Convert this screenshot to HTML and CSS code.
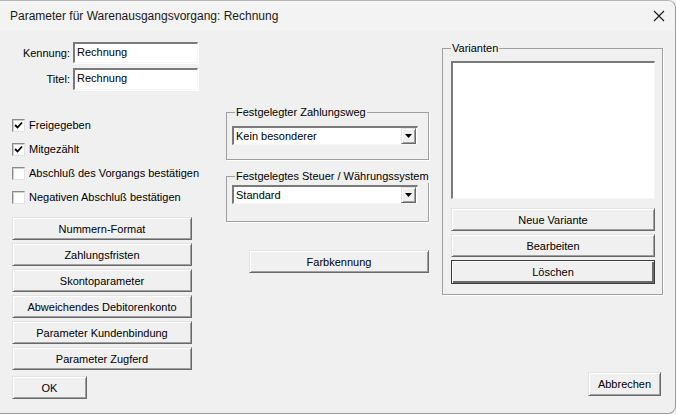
FILE: index.html
```html
<!DOCTYPE html>
<html lang="de">
<head>
<meta charset="utf-8">
<title>Parameter für Warenausgangsvorgang: Rechnung</title>
<link rel="stylesheet" href="styles.css">
</head>
<body>
<div class="window">
  <div class="titlebar">
    <span class="title">Parameter für Warenausgangsvorgang: Rechnung</span>
    <svg class="close" width="12" height="12" viewBox="0 0 12 12"><path d="M1 1 L11 11 M11 1 L1 11" stroke="#1a1a1a" stroke-width="1.1" fill="none"/></svg>
  </div>
  <div class="client">
    <div class="main">
      <div class="col-left">
        <div class="field-row"><label class="lbl">Kennung:</label><div class="edit">Rechnung</div></div>
        <div class="field-row second"><label class="lbl">Titel:</label><div class="edit">Rechnung</div></div>
        <div class="checks">
          <div class="check"><span class="box"><svg width="9" height="9" viewBox="0 0 9 9"><path d="M1 4 L3.5 6.5 L8 1.5" stroke="#000" stroke-width="1.8" fill="none"/></svg></span>Freigegeben</div>
          <div class="check"><span class="box"><svg width="9" height="9" viewBox="0 0 9 9"><path d="M1 4 L3.5 6.5 L8 1.5" stroke="#000" stroke-width="1.8" fill="none"/></svg></span>Mitgezählt</div>
          <div class="check"><span class="box"></span>Abschluß des Vorgangs bestätigen</div>
          <div class="check"><span class="box"></span>Negativen Abschluß bestätigen</div>
        </div>
        <div class="btn-stack">
          <div class="btn">Nummern-Format</div>
          <div class="btn">Zahlungsfristen</div>
          <div class="btn">Skontoparameter</div>
          <div class="btn">Abweichendes Debitorenkonto</div>
          <div class="btn">Parameter Kundenbindung</div>
          <div class="btn">Parameter Zugferd</div>
        </div>
      </div>
      <div class="col-mid">
        <fieldset class="group g-pay">
          <legend>Festgelegter Zahlungsweg</legend>
          <div class="combo"><span class="combo-text">Kein besonderer</span><span class="combo-btn"><svg width="7" height="4" viewBox="0 0 7 4"><path d="M0 0 H7 L3.5 4 Z" fill="#000"/></svg></span></div>
        </fieldset>
        <fieldset class="group g-tax">
          <legend>Festgelegtes Steuer / Währungssystem</legend>
          <div class="combo"><span class="combo-text">Standard</span><span class="combo-btn"><svg width="7" height="4" viewBox="0 0 7 4"><path d="M0 0 H7 L3.5 4 Z" fill="#000"/></svg></span></div>
        </fieldset>
        <div class="btn farb">Farbkennung</div>
      </div>
      <div class="col-right">
        <fieldset class="group g-var">
          <legend>Varianten</legend>
          <div class="listbox"></div>
          <div class="var-btns">
            <div class="btn">Neue Variante</div>
            <div class="btn">Bearbeiten</div>
            <div class="btn default">Löschen</div>
          </div>
        </fieldset>
      </div>
    </div>
    <div class="footer">
      <div class="btn ok">OK</div>
      <div class="btn cancel">Abbrechen</div>
    </div>
  </div>
</div>
</body>
</html>
```
FILE: styles.css
```css
* { box-sizing: border-box; }
html, body { margin: 0; padding: 0; }
body {
  width: 676px;
  height: 414px;
  overflow: hidden;
  background: #f0f0f0;
  font-family: "Liberation Sans", Arial, sans-serif;
  font-size: 11px;
  color: #000;
  white-space: nowrap;
}
.window {
  width: 676px;
  height: 414px;
  background: #f0f0f0;
  border-right: 1px solid #9a9a9a;
  border-bottom: 1px solid #9a9a9a;
  border-top: 1px solid #b5b5b5;
  border-radius: 0 8px 8px 0;
  overflow: hidden;
  display: flex;
  flex-direction: column;
}
.titlebar {
  height: 30px;
  background: #f3f3f3;
  display: flex;
  align-items: center;
  justify-content: space-between;
  padding: 0 10px 0 10px;
  flex: none;
}
.title {
  font-size: 12px;
  color: #1a1a1a;
}
.client {
  flex: 1;
  display: flex;
  flex-direction: column;
  padding: 11px 13px 0 12px;
}
.main {
  display: flex;
  align-items: flex-start;
}
.col-left { width: 187px; }
.col-mid { width: 203px; margin-left: 27px; }
.col-right { width: 221px; margin-left: 13px; }

/* edit fields */
.field-row {
  display: flex;
  align-items: center;
  height: 21px;
}
.field-row.second { margin-top: 5px; height: 22px; }
.lbl {
  width: 58px;
  text-align: right;
  margin-right: 3px;
}
.edit {
  width: 125px;
  height: 100%;
  background: #fff;
  border-style: solid;
  border-width: 2px 1px 1px 2px;
  border-color: #7a7a7a #f6f6f6 #f6f6f6 #7a7a7a;
  box-shadow: 1px 1px 0 #fff;
  padding: 1px 2px 0 2px;
  line-height: 15px;
}

/* checkboxes */
.checks { margin-top: 23px; }
.check {
  display: flex;
  align-items: center;
  height: 24px;
}
.box {
  width: 13px;
  height: 13px;
  flex: none;
  background: #fff;
  border-style: solid;
  border-width: 1px;
  border-color: #8a8a8a #e3e3e3 #e3e3e3 #8a8a8a;
  box-shadow: inset 1px 1px 0 #cfcfcf;
  margin-right: 4px;
  display: flex;
  align-items: center;
  justify-content: center;
}

/* buttons */
.btn {
  height: 23px;
  display: flex;
  align-items: center;
  justify-content: center;
  background: #f0f0f0;
  border-style: solid;
  border-width: 1px;
  border-color: #e3e3e3 #696969 #696969 #e3e3e3;
  box-shadow: inset 1px 1px 0 #fff, inset -1px -1px 0 #a0a0a0;
  color: #000;
}
.btn-stack {
  margin-top: 8px;
  width: 180px;
  display: flex;
  flex-direction: column;
  gap: 3px;
}

/* group boxes */
.group {
  margin: 0;
  border: 1px solid #a0a0a0;
  box-shadow: 1px 1px 0 #fff;
  min-width: 0;
}
.group legend {
  padding: 0 1px;
  line-height: 13px;
  height: 13px;
  white-space: nowrap;
}
.g-pay {
  margin-top: 64px;
  padding: 7px 11px 14px 5px;
}
.g-pay legend { margin-left: 3px; }
.g-tax {
  margin-top: 10px;
  padding: 2px 11px 17px 5px;
}
.g-tax legend { margin-left: 3px; margin-right: -8px; }
.combo {
  height: 19px;
  width: 186px;
  background: #fff;
  border-style: solid;
  border-width: 2px 1px 1px 2px;
  border-color: #7a7a7a #f6f6f6 #f6f6f6 #7a7a7a;
  display: flex;
  align-items: center;
  justify-content: space-between;
}
.combo-text { padding-left: 2px; }
.combo-btn {
  width: 15px;
  height: 16px;
  margin-right: 1px;
  background: #f0f0f0;
  border-style: solid;
  border-width: 1px;
  border-color: #e3e3e3 #696969 #696969 #e3e3e3;
  box-shadow: inset 1px 1px 0 #fff, inset -1px -1px 0 #a0a0a0;
  display: flex;
  align-items: center;
  justify-content: center;
}
.farb {
  margin-top: 28px;
  margin-left: 23px;
  width: 180px;
}

.g-var {
  padding: 6px 7px 10px 8px;
}
.listbox {
  width: 204px;
  height: 138px;
  background: #fff;
  border-style: solid;
  border-width: 2px 1px 1px 2px;
  border-color: #7a7a7a #f6f6f6 #f6f6f6 #7a7a7a;
}
.var-btns {
  margin-top: 9px;
  width: 204px;
  display: flex;
  flex-direction: column;
  gap: 3px;
}
.btn.default {
  border: 1px solid #3c3c3c;
  box-shadow: inset 1px 1px 0 #fff, inset -2px -2px 0 #696969;
  height: 24px;
}

.footer {
  display: flex;
  justify-content: space-between;
  align-items: flex-start;
  margin-top: 2px;
  padding-right: 1px;
}
.ok {
  width: 75px;
  margin-top: 4px;
}
.cancel {
  width: 73px;
  height: 24px;
}
```
